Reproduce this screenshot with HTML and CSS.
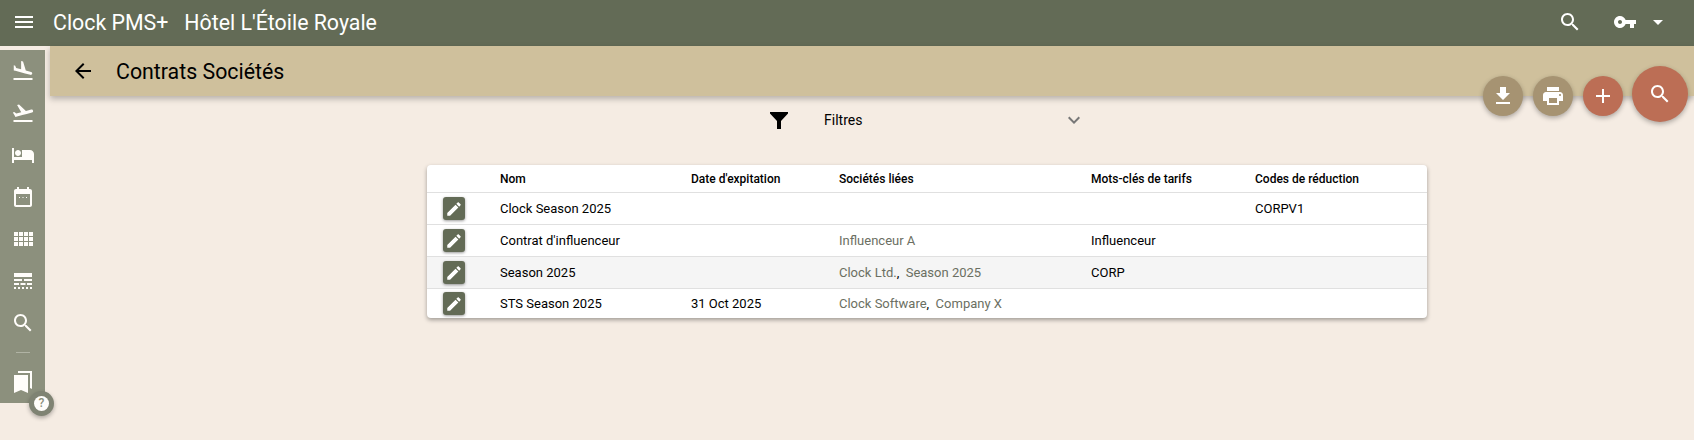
FILE: index.html
```html
<!DOCTYPE html>
<html lang="fr">
<head>
    <meta charset="UTF-8">
    <title>Contrats Sociétés</title>
    <link rel="stylesheet" href="styles.css">
</head>
<body>

    <!-- Top toolbar -->
    <header class="toolbar">
        <svg class="icon menu-icon" viewBox="0 0 24 24"><path d="M3 18h18v-2H3v2zm0-5h18v-2H3v2zm0-7v2h18V6H3z"/></svg>
        <span class="app-name">Clock PMS+</span>
        <span class="hotel-name">Hôtel L'Étoile Royale</span>
        <svg class="icon toolbar-search" viewBox="0 0 24 24"><path d="M15.5 14h-.79l-.28-.27C15.41 12.59 16 11.11 16 9.5 16 5.91 13.09 3 9.5 3S3 5.91 3 9.5 5.91 16 9.5 16c1.61 0 3.09-.59 4.23-1.57l.27.28v.79l5 4.99L20.49 19l-4.99-5zm-6 0C7.01 14 5 11.99 5 9.5S7.01 5 9.5 5 14 7.01 14 9.5 11.99 14 9.5 14z"/></svg>
        <svg class="icon toolbar-key" viewBox="0 0 24 24"><path d="M12.65 10C11.83 7.67 9.61 6 7 6c-3.31 0-6 2.69-6 6s2.69 6 6 6c2.61 0 4.83-1.67 5.65-4H17v4h4v-4h2v-4H12.65zM7 14c-1.1 0-2-.9-2-2s.9-2 2-2 2 .9 2 2-.9 2-2 2z"/></svg>
        <svg class="icon toolbar-caret" viewBox="0 0 24 24"><path d="M7 10l5 5 5-5z"/></svg>
    </header>

    <div class="layout">
        <!-- Side menu -->
        <nav class="sidebar">
            <svg class="icon side-icon" viewBox="0 0 24 24"><path d="M2.5 19h19v2h-19zm7.18-5.73l4.35 1.16 5.31 1.42c.8.21 1.62-.26 1.84-1.06.21-.8-.26-1.62-1.06-1.84l-5.31-1.42-2.76-9.02L10.12 2v8.28L5.15 8.95l-.93-2.32-1.45-.39v5.17l1.6.43 5.31 1.43z"/></svg>
            <svg class="icon side-icon" viewBox="0 0 24 24"><path d="M2.5 19h19v2h-19zm19.57-9.36c-.21-.8-1.04-1.28-1.84-1.06L14.92 10l-6.9-6.43-1.93.51 4.14 7.17-4.97 1.33-1.97-1.54-1.45.39 1.82 3.16.77 1.33 1.6-.43 5.31-1.42 4.35-1.16L21 11.49c.81-.23 1.28-1.05 1.07-1.85z"/></svg>
            <svg class="icon side-icon" viewBox="0 0 24 24"><path d="M7 13c1.66 0 3-1.34 3-3S8.66 7 7 7s-3 1.34-3 3 1.34 3 3 3zm12-6h-8v7H3V5H1v15h2v-3h18v3h2v-9c0-2.21-1.79-4-4-4z"/></svg>
            <svg class="icon side-icon" viewBox="0 0 24 24"><path d="M9 12H8v1h1v-1zm3.5 0h-1v1h1v-1zm3.5 0h-1v1h1v-1zm3-8h-1V2h-2v2H8V2H6v2H5c-1.11 0-1.99.9-1.99 2L3 20c0 1.1.89 2 2 2h14c1.1 0 2-.9 2-2V6c0-1.1-.9-2-2-2zm0 16H5V9h14v11z"/></svg>
            <svg class="icon side-icon" viewBox="0 0 24 24"><path d="M3 9h4V5H3v4zm0 5h4v-4H3v4zm5 0h4v-4H8v4zm5 0h4v-4h-4v4zM8 9h4V5H8v4zm5-4v4h4V5h-4zm5 9h4v-4h-4v4zM3 19h4v-4H3v4zm5 0h4v-4H8v4zm5 0h4v-4h-4v4zm5 0h4v-4h-4v4zm0-14v4h4V5h-4z"/></svg>
            <svg class="icon side-icon" viewBox="0 0 24 24"><path d="M3 16h5v-2H3v2zm6.5 0h5v-2h-5v2zm6.5 0h5v-2h-5v2zM3 20h2v-2H3v2zm4 0h2v-2H7v2zm4 0h2v-2h-2v2zm4 0h2v-2h-2v2zm4 0h2v-2h-2v2zM3 12h8v-2H3v2zm10 0h8v-2h-8v2zM3 4v4h18V4H3z"/></svg>
            <svg class="icon side-icon" viewBox="0 0 24 24"><path d="M15.5 14h-.79l-.28-.27C15.41 12.59 16 11.11 16 9.5 16 5.91 13.09 3 9.5 3S3 5.91 3 9.5 5.91 16 9.5 16c1.61 0 3.09-.59 4.23-1.57l.27.28v.79l5 4.99L20.49 19l-4.99-5zm-6 0C7.01 14 5 11.99 5 9.5S7.01 5 9.5 5 14 7.01 14 9.5 11.99 14 9.5 14z"/></svg>
            <div class="side-divider"></div>
            <svg class="icon side-icon" viewBox="0 0 24 24"><path d="M19 18l2 1V1H7v2h12v15zM17 5H3v18l7-3 7 3V5z"/></svg>
            <div class="help-button"><span class="help-mark">?</span></div>
        </nav>

        <main class="content">
            <div class="page-bar">
                <svg class="icon back-icon" viewBox="0 0 24 24"><path d="M20 11H7.83l5.59-5.59L12 4l-8 8 8 8 1.41-1.41L7.83 13H20v-2z"/></svg>
                <h1 class="page-title">Contrats Sociétés</h1>
            </div>

            <div class="page-body">
                <!-- Filters -->
                <div class="filter-row">
                    <svg class="icon filter-icon" viewBox="0 0 24 24"><path d="M3 4h18v1.5L14 13v8h-4v-8L3 5.5z"/></svg>
                    <span class="filter-label">Filtres</span>
                    <svg class="icon filter-chevron" viewBox="0 0 24 24"><path d="M16.59 8.59L12 13.17 7.41 8.59 6 10l6 6 6-6z"/></svg>
                </div>

                <!-- Contracts table -->
                <div class="table-card">
                    <table class="contracts">
                        <thead>
                            <tr>
                                <th class="col-edit"></th>
                                <th class="col-name">Nom</th>
                                <th class="col-date">Date d'expitation</th>
                                <th class="col-companies">Sociétés liées</th>
                                <th class="col-keywords">Mots-clés de tarifs</th>
                                <th>Codes de réduction</th>
                            </tr>
                        </thead>
                        <tbody>
                            <tr>
                                <td><button class="edit-button"><svg class="icon" viewBox="0 0 24 24"><path d="M3 17.25V21h3.75L17.81 9.94l-3.75-3.75L3 17.25zM20.71 7.04c.39-.39.39-1.02 0-1.41l-2.34-2.34c-.39-.39-1.02-.39-1.41 0l-1.83 1.83 3.75 3.75 1.83-1.83z"/></svg></button></td>
                                <td>Clock Season 2025</td>
                                <td></td>
                                <td></td>
                                <td></td>
                                <td>CORPV1</td>
                            </tr>
                            <tr>
                                <td><button class="edit-button"><svg class="icon" viewBox="0 0 24 24"><path d="M3 17.25V21h3.75L17.81 9.94l-3.75-3.75L3 17.25zM20.71 7.04c.39-.39.39-1.02 0-1.41l-2.34-2.34c-.39-.39-1.02-.39-1.41 0l-1.83 1.83 3.75 3.75 1.83-1.83z"/></svg></button></td>
                                <td>Contrat d'influenceur</td>
                                <td></td>
                                <td><a class="company">Influenceur A</a></td>
                                <td>Influenceur</td>
                                <td></td>
                            </tr>
                            <tr class="row-hover">
                                <td><button class="edit-button"><svg class="icon" viewBox="0 0 24 24"><path d="M3 17.25V21h3.75L17.81 9.94l-3.75-3.75L3 17.25zM20.71 7.04c.39-.39.39-1.02 0-1.41l-2.34-2.34c-.39-.39-1.02-.39-1.41 0l-1.83 1.83 3.75 3.75 1.83-1.83z"/></svg></button></td>
                                <td>Season 2025</td>
                                <td></td>
                                <td><a class="company">Clock Ltd.</a>,&nbsp; <a class="company">Season 2025</a></td>
                                <td>CORP</td>
                                <td></td>
                            </tr>
                            <tr>
                                <td><button class="edit-button"><svg class="icon" viewBox="0 0 24 24"><path d="M3 17.25V21h3.75L17.81 9.94l-3.75-3.75L3 17.25zM20.71 7.04c.39-.39.39-1.02 0-1.41l-2.34-2.34c-.39-.39-1.02-.39-1.41 0l-1.83 1.83 3.75 3.75 1.83-1.83z"/></svg></button></td>
                                <td>STS Season 2025</td>
                                <td>31 Oct 2025</td>
                                <td><a class="company">Clock Software</a>,&nbsp; <a class="company">Company X</a></td>
                                <td></td>
                                <td></td>
                            </tr>
                        </tbody>
                    </table>
                </div>
            </div>
        </main>
    </div>

    <!-- Floating actions -->
    <div class="fab-group">
        <button class="fab fab-tan"><svg class="icon" viewBox="0 0 24 24"><path d="M19 9h-4V3H9v6H5l7 7 7-7zM5 18v2h14v-2H5z"/></svg></button>
        <button class="fab fab-tan"><svg class="icon" viewBox="0 0 24 24"><path d="M19 8H5c-1.66 0-3 1.34-3 3v6h4v4h12v-4h4v-6c0-1.66-1.34-3-3-3zm-3 11H8v-5h8v5zm3-7c-.55 0-1-.45-1-1s.45-1 1-1 1 .45 1 1-.45 1-1 1zm-1-9H6v4h12V3z"/></svg></button>
        <button class="fab fab-red"><svg class="icon" viewBox="0 0 24 24"><path d="M19 13h-6v6h-2v-6H5v-2h6V5h2v6h6v2z"/></svg></button>
        <button class="fab fab-red fab-large"><svg class="icon" viewBox="0 0 24 24"><path d="M15.5 14h-.79l-.28-.27C15.41 12.59 16 11.11 16 9.5 16 5.91 13.09 3 9.5 3S3 5.91 3 9.5 5.91 16 9.5 16c1.61 0 3.09-.59 4.23-1.57l.27.28v.79l5 4.99L20.49 19l-4.99-5zm-6 0C7.01 14 5 11.99 5 9.5S7.01 5 9.5 5 14 7.01 14 9.5 11.99 14 9.5 14z"/></svg></button>
    </div>

</body>
</html>
```

FILE: styles.css
```css
html, body {
    height: 100%;
}

body {
    font-family: Roboto, "Liberation Sans", sans-serif;
    background-color: #f5ece3;
    color: #000;
    margin: 0;
    overflow: hidden;
}

.icon {
    display: block;
    width: 24px;
    height: 24px;
    fill: currentColor;
    flex: none;
}

/* Toolbar */
.toolbar {
    display: flex;
    align-items: center;
    height: 46px;
    box-sizing: border-box;
    padding: 0 24px 2px 12px;
    background-color: #636b56;
    color: #fff;
    font-size: 21.33px;
}

.app-name {
    margin-left: 17px;
}

.hotel-name {
    margin-left: 16px;
}

.toolbar-search {
    margin-left: auto;
}

.toolbar-key {
    margin-left: 31px;
}

.toolbar-caret {
    margin-left: 9px;
}

/* Layout */
.layout {
    display: flex;
    align-items: flex-start;
}

.sidebar {
    position: relative;
    display: flex;
    flex-direction: column;
    align-items: center;
    width: 45px;
    height: 353px;
    margin-top: 4px;
    padding-top: 9px;
    box-sizing: border-box;
    background-color: #8c907d;
    color: #fffdfa;
}

.side-icon {
    margin-bottom: 18px;
}

.side-divider {
    flex: none;
    width: 14px;
    height: 1px;
    margin: -1px 0 17px;
    background-color: #b0b3a4;
}

.help-button {
    position: absolute;
    left: 29px;
    top: 341px;
    display: flex;
    align-items: center;
    justify-content: center;
    width: 25px;
    height: 25px;
    border-radius: 50%;
    background-color: #7f8373;
    box-shadow: 0 2px 4px rgba(0, 0, 0, 0.3);
}

.help-mark {
    width: 15px;
    height: 15px;
    border-radius: 50%;
    background-color: #fffdfa;
    color: #8c907d;
    font-size: 12px;
    font-weight: 500;
    line-height: 15px;
    text-align: center;
}

/* Main */
.content {
    flex: 1;
    margin-left: 5px;
}

.page-bar {
    display: flex;
    align-items: center;
    height: 50px;
    padding-left: 21px;
    background-color: #cfc09c;
    box-shadow: 0 3px 6px rgba(0, 0, 0, 0.25);
}

.page-title {
    margin: 0 0 0 21px;
    font-size: 21.33px;
    font-weight: 400;
}

.page-body {
    width: 1000px;
    margin-left: 377px;
}

.filter-row {
    display: flex;
    align-items: center;
    height: 48px;
    margin-left: 340px;
    font-size: 14px;
}

.filter-label {
    margin-left: 33px;
}

.filter-chevron {
    margin-left: 200px;
    color: #777;
}

.table-card {
    margin-top: 21px;
    background: white;
    border-radius: 4px;
    box-shadow: 0 2px 4px rgba(0, 0, 0, 0.35);
    overflow: hidden;
}

.contracts {
    width: 100%;
    table-layout: fixed;
    border-collapse: collapse;
    font-size: 13px;
}

.contracts th {
    height: 27px;
    padding: 0;
    font-size: 12px;
    font-weight: 500;
    text-align: left;
    border-bottom: 1px solid #e0e0e0;
}

.contracts td {
    height: 31px;
    padding: 0;
    border-bottom: 1px solid #e0e0e0;
}

.contracts tbody tr:last-child td {
    height: 29px;
    border-bottom: none;
}

.col-edit {
    width: 73px;
}

.col-name {
    width: 191px;
}

.col-date {
    width: 148px;
}

.col-companies {
    width: 252px;
}

.col-keywords {
    width: 164px;
}

.row-hover {
    background-color: #f5f5f5;
}

.company {
    color: #6b6f62;
}

.edit-button {
    display: flex;
    align-items: center;
    justify-content: center;
    width: 22px;
    height: 23px;
    margin-left: 16px;
    padding: 0;
    border: none;
    border-radius: 3px;
    background-color: #636b56;
    color: #fff;
    box-shadow: 0 1px 3px rgba(0, 0, 0, 0.4);
}

.edit-button .icon {
    width: 18px;
    height: 18px;
}

/* Floating buttons */
.fab-group {
    position: absolute;
    top: 66px;
    right: 6px;
    display: flex;
    align-items: flex-start;
    gap: 10px;
}

.fab {
    display: flex;
    align-items: center;
    justify-content: center;
    width: 40px;
    height: 40px;
    margin-top: 10px;
    padding: 0;
    border: none;
    border-radius: 50%;
    color: #fff;
    box-shadow: 0 2px 5px rgba(0, 0, 0, 0.3);
}

.fab-tan {
    background-color: #a69372;
}

.fab-red {
    background-color: #bc6e55;
}

.fab-large {
    width: 56px;
    height: 56px;
    margin-top: 0;
    margin-left: -1px;
}
```
